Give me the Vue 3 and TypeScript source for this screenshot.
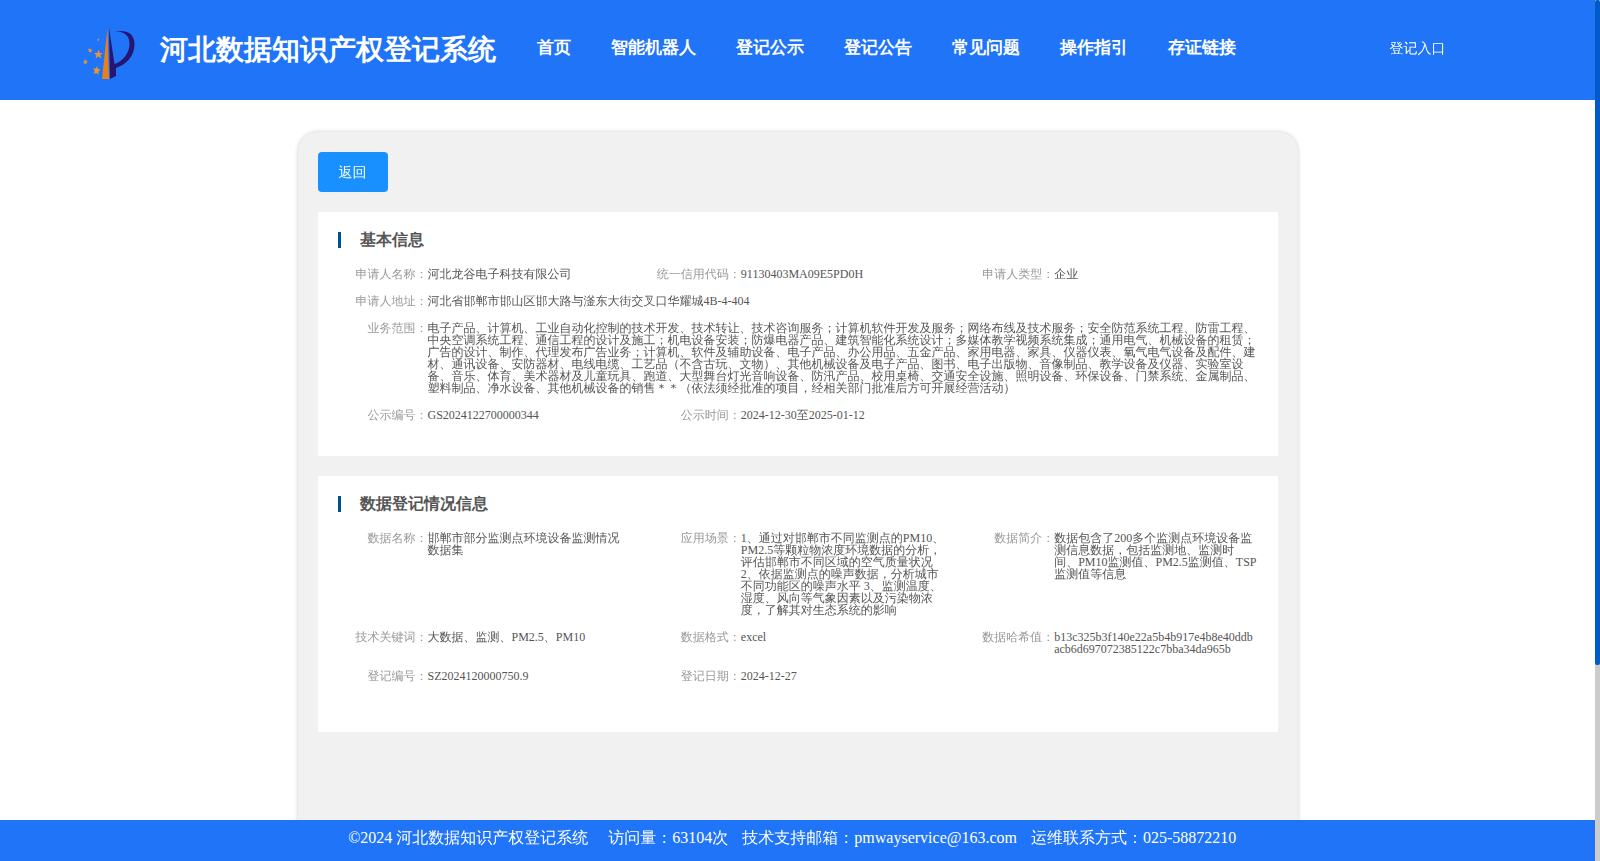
<script setup lang="ts">
interface Field {
  label: string
  value: string
  wide?: boolean
}

interface Section {
  title: string
  fields: Field[]
  size: string
}

const navItems: string[] = ['首页', '智能机器人', '登记公示', '登记公告', '常见问题', '操作指引', '存证链接']

const sections: Section[] = [
  {
    title: '基本信息',
    size: 'basic',
    fields: [
      { label: '申请人名称', value: '河北龙谷电子科技有限公司' },
      { label: '统一信用代码', value: '91130403MA09E5PD0H' },
      { label: '申请人类型', value: '企业' },
      { label: '申请人地址', value: '河北省邯郸市邯山区邯大路与滏东大街交叉口华耀城4B-4-404', wide: true },
      {
        label: '业务范围',
        value:
          '电子产品、计算机、工业自动化控制的技术开发、技术转让、技术咨询服务；计算机软件开发及服务；网络布线及技术服务；安全防范系统工程、防雷工程、中央空调系统工程、通信工程的设计及施工；机电设备安装；防爆电器产品、建筑智能化系统设计；多媒体教学视频系统集成；通用电气、机械设备的租赁；广告的设计、制作、代理发布广告业务；计算机、软件及辅助设备、电子产品、办公用品、五金产品、家用电器、家具、仪器仪表、氧气电气设备及配件、建材、通讯设备、安防器材、电线电缆、工艺品（不含古玩、文物）、其他机械设备及电子产品、图书、电子出版物、音像制品、教学设备及仪器、实验室设备、音乐、体育、美术器材及儿童玩具、跑道、大型舞台灯光音响设备、防汛产品、校用桌椅、交通安全设施、照明设备、环保设备、门禁系统、金属制品、塑料制品、净水设备、其他机械设备的销售＊＊（依法须经批准的项目，经相关部门批准后方可开展经营活动）',
        wide: true,
      },
      { label: '公示编号', value: 'GS2024122700000344' },
      { label: '公示时间', value: '2024-12-30至2025-01-12' },
    ],
  },
  {
    title: '数据登记情况信息',
    size: 'data',
    fields: [
      { label: '数据名称', value: '邯郸市部分监测点环境设备监测情况数据集' },
      {
        label: '应用场景',
        value:
          '1、通过对邯郸市不同监测点的PM10、PM2.5等颗粒物浓度环境数据的分析，评估邯郸市不同区域的空气质量状况 2、依据监测点的噪声数据，分析城市不同功能区的噪声水平 3、监测温度、湿度、风向等气象因素以及污染物浓度，了解其对生态系统的影响',
      },
      {
        label: '数据简介',
        value: '数据包含了200多个监测点环境设备监测信息数据，包括监测地、监测时间、PM10监测值、PM2.5监测值、TSP监测值等信息',
      },
      { label: '技术关键词', value: '大数据、监测、PM2.5、PM10' },
      { label: '数据格式', value: 'excel' },
      { label: '数据哈希值', value: 'b13c325b3f140e22a5b4b917e4b8e40ddbacb6d697072385122c7bba34da965b' },
      { label: '登记编号', value: 'SZ2024120000750.9' },
      { label: '登记日期', value: '2024-12-27' },
    ],
  },
]

const footerItems: string[] = [
  '©2024 河北数据知识产权登记系统',
  '访问量：63104次',
  '技术支持邮箱：pmwayservice@163.com',
  '运维联系方式：025-58872210',
]
</script>

<template>
  <div class="page">
    <header class="header">
      <svg class="logo" viewBox="0 0 60 60" aria-hidden="true">
        <path fill="#e8801e" d="M27.500 4 L22 55 L29 55 Z" />
        <path fill="#251671" d="M29 4 L30 55 L36 52 L36 44 C47 40 54.500 32 54.500 20 C54.500 9 46 5.500 35 7.500 C45 7 49.500 12 49.500 20 C49.500 29 43 37 34.500 40 Z" />
        <g fill="#e8943a">
          <path d="M18.500 25.500 L19.600 29 L22.500 29 L20.300 31.200 L21.500 34.500 L18.300 32.500 L15.500 34.500 L16.400 31.200 L14 29 L17.300 29 Z" />
          <path d="M17 42 L18 45 L20.500 45.500 L18.500 47.500 L18.500 51 L16.500 49 L13.500 50 L14.700 47 L13 44 L15.800 44.700 Z" />
          <path d="M9.500 24 L10.500 25.500 L12.500 25.500 L11.300 27 L11.300 29 L10 28 L8.500 28 L9 26.500 L7.500 25 L9.200 25.200 Z" />
          <path d="M5.500 35 L6.300 37 L8 37.500 L6.500 38.500 L6.500 40.500 L5.200 39.500 L3.500 39.500 L4.200 38 L3.500 36.500 L5 36.500 Z" />
          <path d="M18.500 14 L19 15.200 L19 17 L17.800 16.500 L16.800 15.800 L18 15.400 Z" />
        </g>
      </svg>
      <h1 class="brand">河北数据知识产权登记系统</h1>
      <nav class="nav">
        <a v-for="item in navItems" :key="item" class="nav-item">{{ item }}</a>
      </nav>
      <a class="entry">登记入口</a>
    </header>

    <main class="main">
      <div class="card">
        <button class="back" type="button">返回</button>
        <section v-for="section in sections" :key="section.title" class="section" :class="section.size">
          <h2 class="section-title">{{ section.title }}</h2>
          <dl class="fields">
            <div v-for="field in section.fields" :key="field.label" class="field" :class="{ wide: field.wide }">
              <dt>{{ field.label }}：</dt>
              <dd>{{ field.value }}</dd>
            </div>
          </dl>
        </section>
      </div>
    </main>

    <footer class="footer">
      <span v-for="item in footerItems" :key="item" class="footer-item">{{ item }}</span>
    </footer>

    <div class="scroll-track"><div class="scroll-thumb"></div></div>
  </div>
</template>

<style>
html,
body {
  overflow: hidden;
}
</style>

<style scoped>
.page {
  position: relative;
  display: flex;
  flex-direction: column;
  box-sizing: border-box;
  height: 861px;
  padding-right: 5px;
  overflow: hidden;
  background: #fff;
  font-family: 'Liberation Serif', 'WenQuanYi Zen Hei', 'Noto Sans CJK SC', serif;
}

.header {
  display: flex;
  flex: none;
  align-items: flex-start;
  height: 100px;
  background: #2074f8;
  color: #fff;
}

.logo {
  flex: none;
  width: 60px;
  height: 60px;
  margin: 24px 0 0 80px;
}

.brand,
.nav,
.section-title {
  font-family: 'Liberation Serif', serif;
  font-weight: bold;
}

.brand {
  flex: none;
  margin: 34px 0 0 19.500px;
  font-size: 28px;
  line-height: 32px;
}

.nav {
  display: flex;
  flex: none;
  gap: 40px;
  margin: 37px 0 0 41.300px;
  font-size: 17px;
  line-height: 22px;
}

.entry {
  margin: 39px 0 0 153.700px;
  font-size: 14px;
  line-height: 20px;
}

.main {
  flex: 1;
  min-height: 0;
  padding-top: 32px;
}

.card {
  box-sizing: border-box;
  width: 1000px;
  height: 1000px;
  margin: 0 auto;
  padding: 20px;
  border-radius: 20px;
  background: #f1f1f1;
  box-shadow: 0 0 4px rgba(0, 0, 0, 0.2);
}

.back {
  display: block;
  width: 70px;
  height: 40px;
  padding: 2px 0 0;
  border: 0;
  border-radius: 4px;
  background: #1890ff;
  color: #fff;
  font-family: inherit;
  font-size: 14px;
}

.section {
  box-sizing: border-box;
  margin-top: 20px;
  padding: 20px 0 0 20px;
  background: #fff;
}

.basic {
  height: 244px;
}

.data {
  height: 256px;
}

.section-title {
  margin: 0 0 20px;
  padding-left: 19.200px;
  border-left: 3px solid #00508e;
  color: #555;
  font-size: 16px;
  line-height: 16px;
}

.fields {
  display: grid;
  grid-template-columns: repeat(3, 1fr);
  row-gap: 15px;
  margin: 0;
  font-size: 12px;
  line-height: 12px;
}

.field {
  display: flex;
  padding-right: 20px;
}

.wide {
  grid-column: 1 / -1;
}

dt {
  flex: none;
  width: 90px;
  color: #999;
  text-align: right;
}

dd {
  flex: 1;
  min-width: 0;
  margin: 0;
  color: #555;
  word-break: break-word;
}

.footer {
  position: relative;
  display: flex;
  flex: none;
  gap: 14px;
  box-sizing: border-box;
  height: 41px;
  padding: 8px 0 0 348.200px;
  background: #2074f8;
  color: #fff;
  font-size: 16px;
  line-height: 20px;
}

.footer-item:first-child {
  margin-right: 6px;
}

.scroll-track {
  position: absolute;
  top: 0;
  right: 0;
  width: 5px;
  height: 100%;
  background: #ccc;
}

.scroll-thumb {
  height: 665px;
  border-radius: 2px;
  background: #005bc8;
}
</style>
